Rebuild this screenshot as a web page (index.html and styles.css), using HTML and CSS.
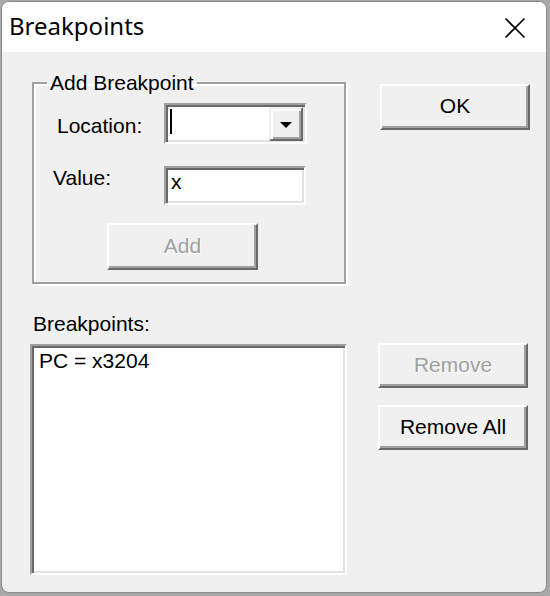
FILE: index.html
```html
<!DOCTYPE html>
<html>
<head>
<meta charset="utf-8">
<link rel="stylesheet" href="styles.css">
</head>
<body>
<div class="window">
  <div class="titlebar">
    <span class="title">Breakpoints</span>
    <svg class="close" width="22" height="22" viewBox="0 0 22 22"><path d="M1.5 1.5 L20.5 20.5 M20.5 1.5 L1.5 20.5" stroke="#000" stroke-width="1.6" fill="none"/></svg>
  </div>
  <div class="client">
    <div class="leftcol">
      <fieldset class="group">
        <legend>Add Breakpoint</legend>
        <div class="row row-loc">
          <span class="label label-loc">Location:</span>
          <div class="combo">
            <div class="combo-text"><span class="caret"></span></div>
            <div class="dropbtn"><svg width="12" height="6" viewBox="0 0 12 6"><path d="M0 0 H12 L6 6 Z" fill="#000"/></svg></div>
          </div>
        </div>
        <div class="row row-val">
          <span class="label label-val">Value:</span>
          <div class="edit">x</div>
        </div>
        <div class="btn btn-add disabled">Add</div>
      </fieldset>
      <div class="list-label">Breakpoints:</div>
      <div class="listbox">
        <div class="item">PC = x3204</div>
      </div>
    </div>
    <div class="rightcol">
      <div class="btn btn-ok">OK</div>
      <div class="btn btn-remove disabled">Remove</div>
      <div class="btn btn-removeall">Remove All</div>
    </div>
  </div>
</div>
</body>
</html>
```
FILE: styles.css
```css
html, body {
  margin: 0;
  padding: 0;
  background: #a8a8a8;
  width: 550px;
  height: 596px;
  overflow: hidden;
}
.window {
  margin: 1px 0 0 1px;
  width: 544px;
  height: 590px;
  border: 1px solid #8a8a8a;
  border-radius: 8px;
  overflow: hidden;
  background: #f0f0f0;
  display: flex;
  flex-direction: column;
}
.titlebar {
  height: 50px;
  background: #ffffff;
  display: flex;
  align-items: center;
  justify-content: space-between;
  padding: 0 20px 0 7px;
  flex: none;
}
.title {
  font-family: "Noto Sans", "Open Sans", sans-serif;
  font-size: 24px;
  color: #000;
  line-height: 30px;
  margin-top: -2px;
}
.close {
  display: block;
  margin-top: 1px;
}
.client {
  flex: 1;
  display: flex;
  align-items: flex-start;
  padding-left: 28px;
  font-family: "Liberation Sans", Arial, sans-serif;
  font-size: 21px;
  line-height: 24px;
  color: #000;
}
.leftcol {
  width: 317px;
  display: flex;
  flex-direction: column;
}
.group {
  margin: 19px 0 0 2px;
  width: 314px;
  box-sizing: border-box;
  height: 213px;
  border: 2px solid #a0a0a0;
  box-shadow: inset 2px 2px 0 #fff, 2px 2px 0 #fff;
  padding: 0;
  min-width: 0;
}
.group legend {
  margin-left: 13px;
  padding: 0 3px;
  line-height: 24px;
}
.row {
  display: flex;
  align-items: flex-start;
}
.row-loc {
  margin-top: 8px;
}
.row-val {
  margin-top: 22px;
}
.label-loc {
  margin-left: 23px;
  width: 107px;
  padding-top: 11px;
}
.label-val {
  margin-left: 19px;
  width: 111px;
  padding-top: 0;
}
.combo {
  width: 143px;
  height: 41px;
  box-sizing: border-box;
  border: 2px solid;
  border-color: #a0a0a0 #fff #fff #a0a0a0;
  box-shadow: inset 2px 2px 0 #696969, inset -2px -2px 0 #e3e3e3;
  background: #fff;
  display: flex;
  padding: 2px 2px 1px 2px;
}
.combo-text {
  flex: 1;
  display: flex;
  align-items: flex-start;
  padding: 2px 0 0 2px;
}
.caret {
  width: 2px;
  height: 25px;
  background: #000;
}
.dropbtn {
  width: 34px;
  height: 34px;
  box-sizing: border-box;
  background: #f0f0f0;
  border: 2px solid;
  border-color: #f0f0f0 #696969 #696969 #f0f0f0;
  box-shadow: inset 2px 2px 0 #fff, inset -2px -2px 0 #a0a0a0;
  display: flex;
  align-items: center;
  justify-content: center;
}
.dropbtn svg {
  display: block;
  margin-top: 2px;
}
.edit {
  width: 142px;
  height: 39px;
  box-sizing: border-box;
  border: 2px solid;
  border-color: #a0a0a0 #fff #fff #a0a0a0;
  box-shadow: inset 2px 2px 0 #696969, inset -2px -2px 0 #e3e3e3;
  background: #fff;
  padding: 2px 0 0 5px;
}
.btn {
  box-sizing: border-box;
  width: 150px;
  height: 45px;
  background: #f0f0f0;
  border: 2px solid;
  border-color: #fff #696969 #696969 #fff;
  box-shadow: inset -2px -2px 0 #a0a0a0;
  display: flex;
  align-items: center;
  justify-content: center;
  padding-bottom: 2px;
}
.btn.disabled {
  color: #a0a0a0;
  text-shadow: 1px 1px 0 #fff;
}
.btn-add {
  margin: 18px 0 0 73px;
  width: 151px;
  height: 47px;
}
.list-label {
  margin: 28px 0 0 3px;
}
.listbox {
  margin-top: 8px;
  width: 317px;
  height: 231px;
  box-sizing: border-box;
  border: 2px solid;
  border-color: #a0a0a0 #fff #fff #a0a0a0;
  box-shadow: inset 2px 2px 0 #696969, inset -2px -2px 0 #e3e3e3;
  background: #fff;
  padding: 3px 0 0 7px;
}
.rightcol {
  margin-left: 31px;
  display: flex;
  flex-direction: column;
}
.btn-ok {
  margin: 32px 0 0 2px;
  height: 46px;
}
.btn-remove {
  margin-top: 213px;
}
.btn-removeall {
  margin-top: 17px;
}
```
